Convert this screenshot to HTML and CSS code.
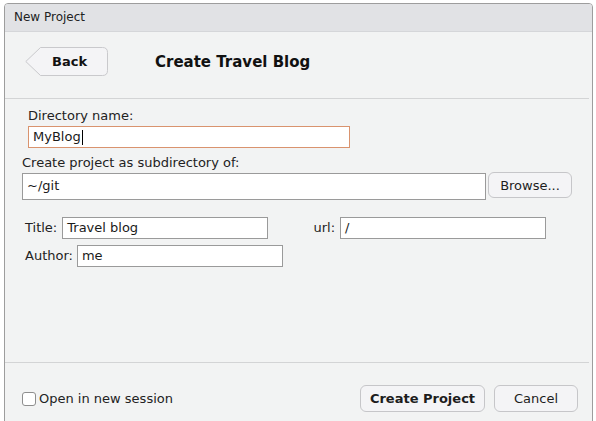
FILE: index.html
```html
<!DOCTYPE html>
<html>
<head>
<meta charset="utf-8">
<link rel="stylesheet" href="styles.css">
</head>
<body>
<div class="backdrop">
  <div class="dialog">
    <div class="titlebar">New Project</div>
    <div class="header">
      <button class="back">
        <svg class="back-shape" width="83" height="29" viewBox="0 0 83 29">
          <path d="M15.5 0.5 H77.5 Q82.5 0.5 82.5 5.5 V23.5 Q82.5 28.5 77.5 28.5 H15.5 L0.8 14.5 Z" fill="#f4f4f6" stroke="#c9c9cc"/>
        </svg>
        <span class="back-label">Back</span>
      </button>
      <h1 class="heading">Create Travel Blog</h1>
    </div>
    <div class="content">
      <div class="field dir">
        <label class="lbl">Directory name:</label>
        <div class="input focus">MyBlog<span class="caret"></span></div>
      </div>
      <div class="field sub">
        <label class="lbl">Create project as subdirectory of:</label>
        <div class="row">
          <div class="input wide">~/git</div>
          <button class="btn browse">Browse...</button>
        </div>
      </div>
      <div class="meta">
        <div class="meta-col">
          <div class="pair"><span class="lbl">Title:</span><div class="input small">Travel blog</div></div>
          <div class="pair"><span class="lbl">Author:</span><div class="input small">me</div></div>
        </div>
        <div class="meta-col right">
          <div class="pair"><span class="lbl">url:</span><div class="input small">/</div></div>
        </div>
      </div>
    </div>
    <div class="footer">
      <label class="check"><span class="box"></span>Open in new session</label>
      <div class="actions">
        <button class="btn primary">Create Project</button>
        <button class="btn cancel">Cancel</button>
      </div>
    </div>
  </div>
</div>
</body>
</html>
```

FILE: styles.css
```css
html, body {
  margin: 0;
  padding: 0;
  background: #ffffff;
  font-family: "DejaVu Sans", sans-serif;
  font-size: 13px;
  color: #1d1d1d;
}
.backdrop {
  width: 596px;
  height: 421px;
  overflow: hidden;
  padding: 3px 0 0 4px;
  box-sizing: border-box;
}
.dialog {
  width: 589px;
  height: 440px;
  background: #f2f3f3;
  border: 1px solid #9d9d9d;
  border-radius: 4px 4px 0 0;
  box-sizing: border-box;
  display: flex;
  flex-direction: column;
}
.titlebar {
  height: 27px;
  background: #e1e2e5;
  border-bottom: 1px solid #d5d6d9;
  font-size: 12px;
  line-height: 27px;
  padding-left: 9px;
  color: #222;
  border-radius: 3px 3px 0 0;
}
.header {
  margin-right: 3px;
  border-bottom: 1px solid #d3d4d5;
  display: flex;
  align-items: center;
  padding-left: 20px;
  padding-bottom: 7px;
  box-sizing: border-box;
  height: 67px;
}
.back {
  position: relative;
  width: 83px;
  height: 29px;
  padding: 0;
  border: none;
  background: transparent;
  font-family: inherit;
}
.back-shape {
  position: absolute;
  left: 0;
  top: 0;
}
.back-label {
  position: relative;
  display: block;
  font-weight: bold;
  font-size: 13px;
  padding-left: 27px;
  text-align: left;
  color: #111;
}
.heading {
  margin: 0 0 0 47px;
  font-size: 15px;
  font-weight: bold;
  color: #111;
}
.content {
  display: flex;
  flex-direction: column;
  padding: 9px 0 0 17px;
  margin-right: 3px;
  border-bottom: 1px solid #d3d4d5;
  height: 264px;
  flex: none;
  box-sizing: border-box;
}
.lbl {
  display: block;
  font-size: 13px;
  color: #222;
  line-height: 16px;
}
.input {
  background: #fff;
  border: 1px solid #9a9a9a;
  box-sizing: border-box;
  font-size: 13px;
  line-height: 20px;
  padding-left: 4px;
  color: #1a1a1a;
}
.dir {
  padding-left: 6px;
}
.dir .lbl {
  margin-bottom: 2px;
}
.focus {
  width: 322px;
  height: 22px;
  border: 1px solid #d9936e;
  display: flex;
  align-items: center;
}
.caret {
  display: inline-block;
  width: 1px;
  height: 15px;
  background: #000;
  margin-left: 1px;
}
.sub {
  margin-top: 7px;
}
.sub .lbl {
  margin-bottom: 2px;
}
.row {
  display: flex;
  align-items: flex-start;
  gap: 2px;
}
.wide {
  width: 464px;
  height: 27px;
  line-height: 24px;
}
.btn {
  font-family: inherit;
  font-size: 13px;
  background: #f4f4f6;
  border: 1px solid #c6c6c9;
  border-radius: 6px;
  color: #1d1d1d;
  padding: 0;
  box-sizing: border-box;
}
.browse {
  width: 84px;
  height: 26px;
  margin-top: -1px;
}
.meta {
  display: flex;
  margin-top: 17px;
  padding-left: 3px;
}
.meta-col {
  display: flex;
  flex-direction: column;
  gap: 6px;
  width: 290px;
}
.meta-col.right {
  padding-left: 13px;
}
.pair {
  display: flex;
  align-items: center;
  gap: 4px;
}
.meta-col.right .lbl {
  margin-right: 1px;
}
.meta-col:first-child .pair:first-child .lbl {
  margin-right: 1px;
}
.small {
  width: 206px;
  height: 22px;
}
.footer {
  display: flex;
  align-items: center;
  justify-content: space-between;
  padding: 22px 14px 0 17px;
}
.check {
  display: flex;
  align-items: center;
  font-size: 13px;
  color: #222;
}
.box {
  width: 12px;
  height: 12px;
  border: 1px solid #8e8e8e;
  border-radius: 3px;
  background: #fff;
  margin-right: 3px;
}
.actions {
  display: flex;
  gap: 9px;
}
.primary {
  width: 125px;
  height: 27px;
  font-weight: bold;
}
.cancel {
  width: 84px;
  height: 27px;
}
```
